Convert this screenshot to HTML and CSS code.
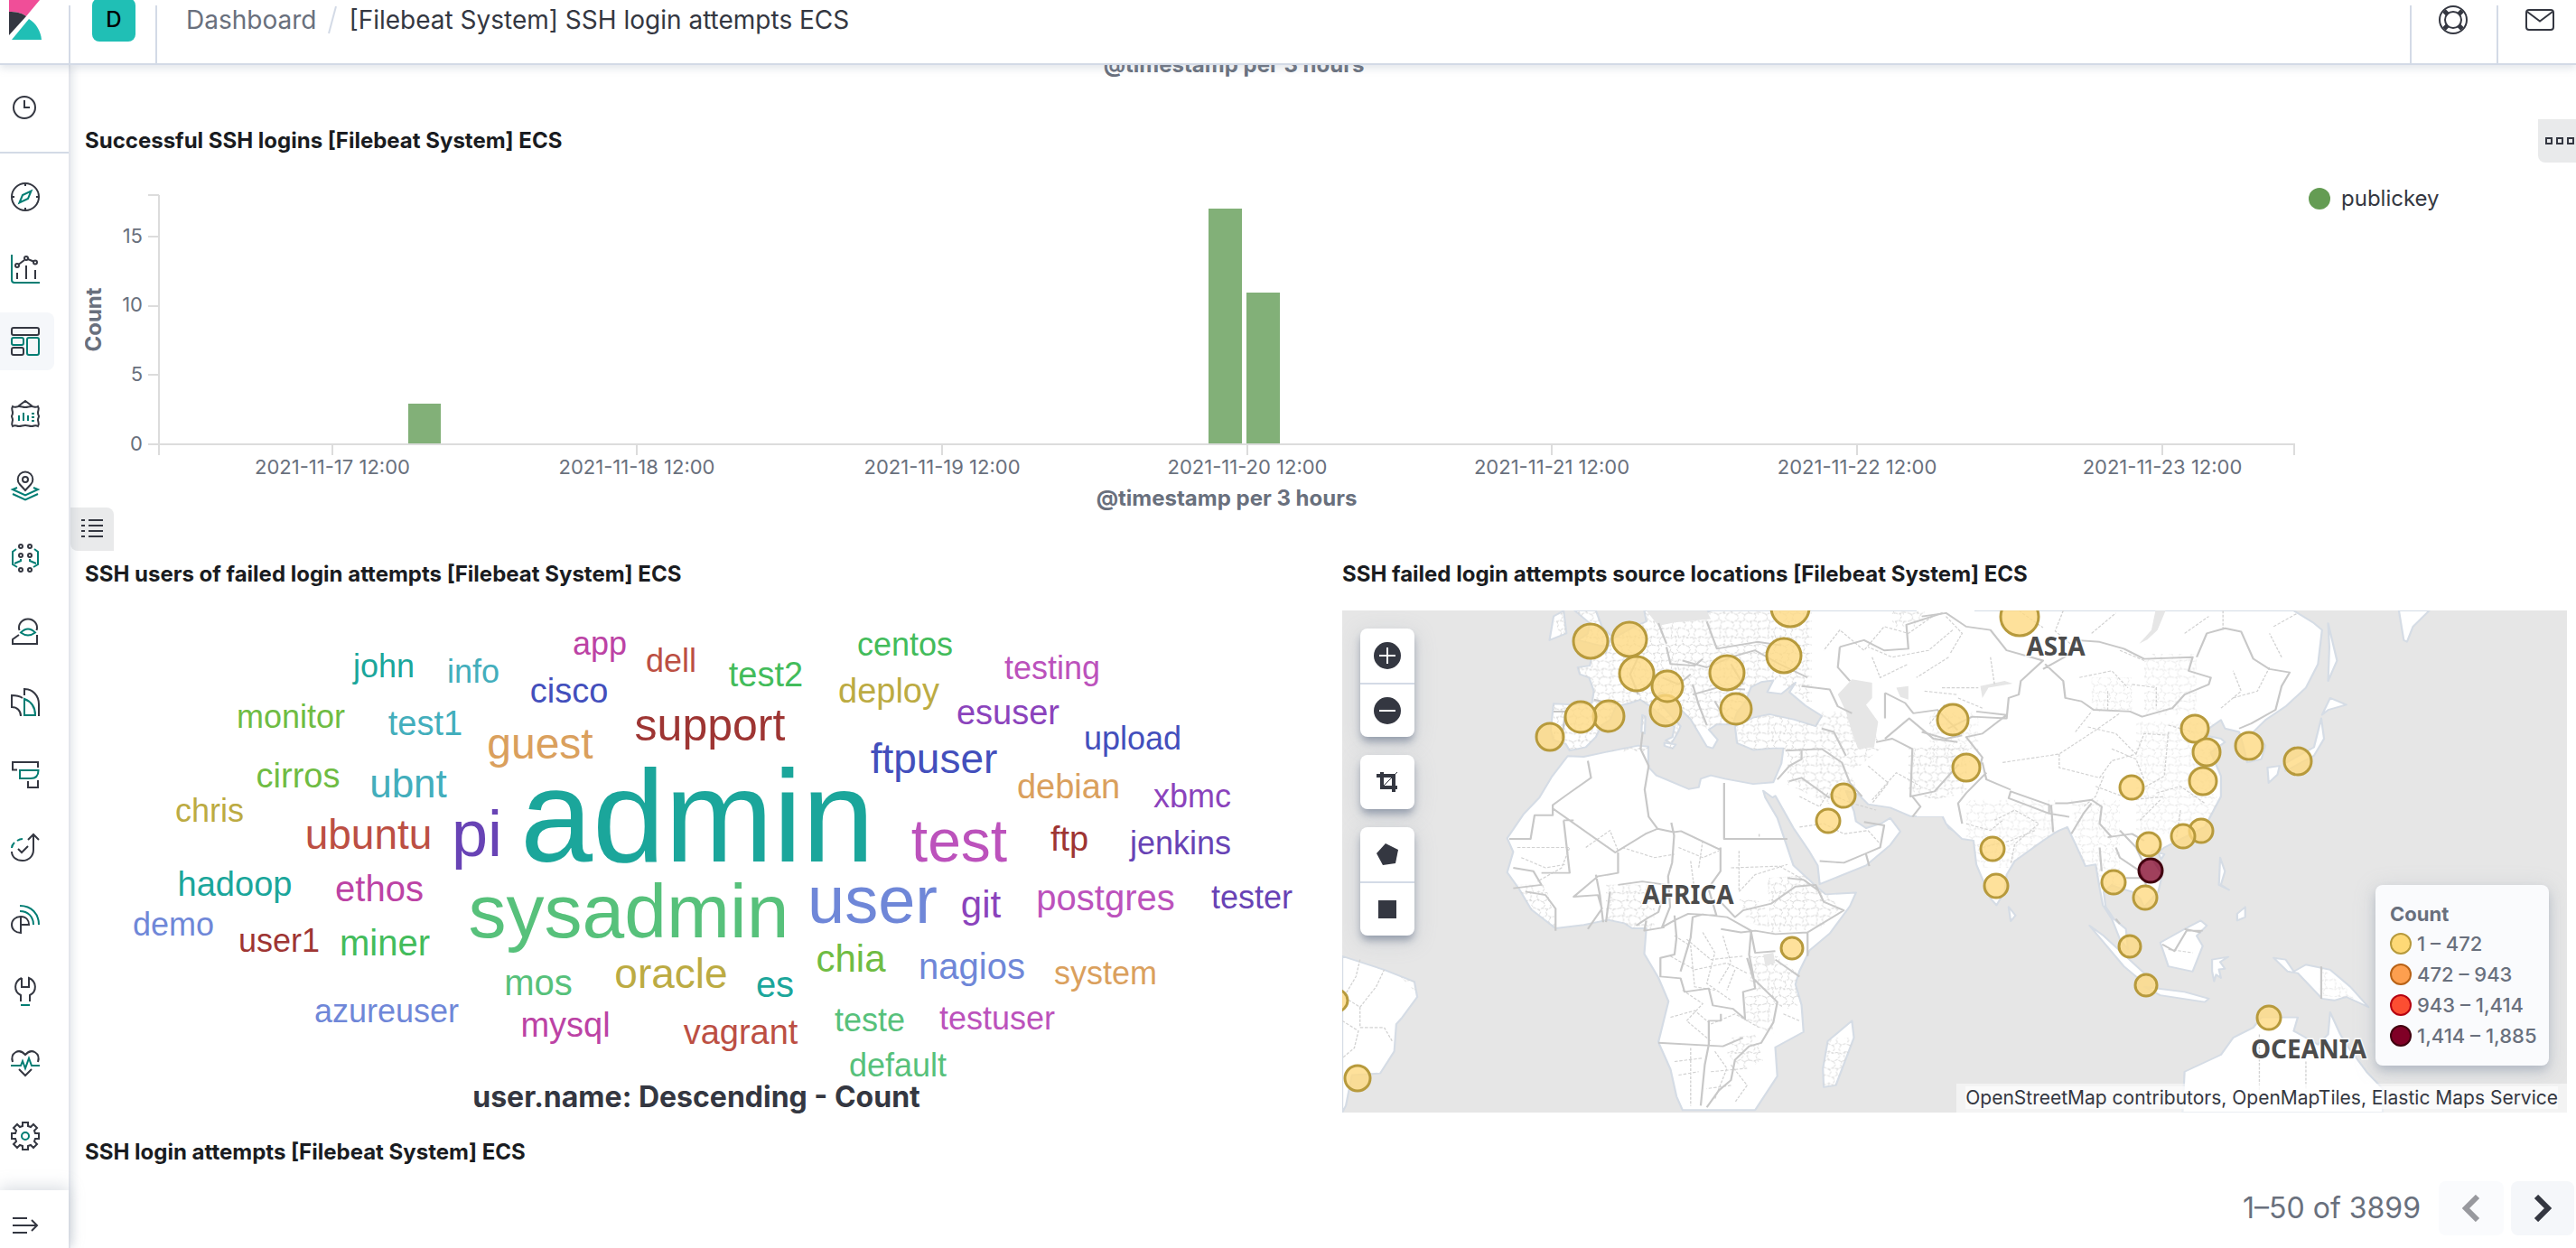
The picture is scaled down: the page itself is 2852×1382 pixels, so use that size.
FILE: index.html
```html
<!DOCTYPE html>
<html lang="en">
<head>
<meta charset="utf-8">
<title>[Filebeat System] SSH login attempts ECS</title>
<link rel="stylesheet" href="styles.css">
</head>
<body>
<header class="header">
  <a class="logo" href="#" aria-label="Home">
    <svg width="36" height="44" viewBox="0 0 36 44"><path fill="#f04e98" d="M0 0h34L19 18C14 14 7 13 0 13z"/><path fill="#343741" d="M0 13c7 0 14 1 19 5L0 39z"/><path fill="#20bfb5" d="M22 21c8 5 13 13 14 23H3z"/></svg>
  </a>
  <div class="cell space"><button class="avatar" type="button">D</button></div>
  <nav class="cell crumbs">
    <a href="#">Dashboard</a>
    <svg width="12" height="32" viewBox="0 0 12 32" aria-hidden="true"><path d="M10 1L2 31" stroke="#d3dae6" stroke-width="2"/></svg>
    <span class="current">[Filebeat System] SSH login attempts ECS</span>
  </nav>
  <div class="cell action"><button type="button" aria-label="Help">
    <svg width="32" height="32" viewBox="0 0 32 32" fill="none" stroke="#343741" stroke-width="2"><circle cx="16" cy="16" r="15"/><circle cx="16" cy="16" r="9"/><path stroke-width="5" d="M6 6l4 4M26 6l-4 4M6 26l4-4M26 26l-4-4"/></svg>
  </button></div>
  <div class="cell action news"><button type="button" aria-label="News">
    <svg width="32" height="24" viewBox="0 0 32 24" fill="none" stroke="#343741" stroke-width="2"><rect x="1" y="1" width="30" height="22" rx="3"/><path d="M2 3l14 10.500L30 3"/></svg>
  </button></div>
</header>

<nav class="side">
  <div class="recent"><a href="#" aria-label="Recently viewed"><svg width="32" height="32" viewBox="0 0 32 32"><circle cx="15" cy="16" r="12"/><path d="M15 8v8h6"/></svg></a></div>
  <ul class="apps">
    <li><a href="#" aria-label="Discover"><svg viewBox="0 0 32 32"><circle cx="16" cy="16" r="15"/><path d="M16 1v3M16 28v3M1 16h3M28 16h3"/><path class="g" d="M9.500 22.500l3.500-8.500 9.500-4.500-3.500 8.500z"/></svg></a></li>
    <li><a href="#" aria-label="Visualize"><svg viewBox="0 0 32 32"><path class="g" d="M1 0v28a3 3 0 0 0 3 3h28"/><path d="M7 20v7M17 12v15M27 17v10M9 10.500l6-4.500M19 5l6 2.500"/><circle cx="7" cy="12" r="2"/><circle cx="17" cy="4" r="2"/><circle cx="27" cy="8.500" r="2"/></svg></a></li>
    <li><a class="on" href="#" aria-label="Dashboard"><svg viewBox="0 0 32 32"><rect x="1" y="1" width="30" height="8" rx="2"/><rect class="g" x="1" y="12" width="13" height="8" rx="2"/><rect x="1" y="23" width="13" height="8" rx="2"/><rect class="g" x="18" y="12" width="13" height="19" rx="2"/></svg></a></li>
    <li><a href="#" aria-label="Canvas"><svg viewBox="0 0 32 32"><path d="M8 8l8-6 8 6M2 8c3 2 4 0 7 0s4 1 7 1 4-1 7-1 4 2 7 0c2 3 0 4 0 7s1 3 1 4-1 2-1 4 2 4 0 7c-3-2-4 0-7 0s-4-1-7-1-4 1-7 1-4-2-7 0c-2-3 0-5 0-7s-1-3-1-4 1-1 1-4-2-4 0-7z"/><path class="g" d="M9 18v6M14 15v9M19 18v6M23 16h3M23 20h3M23 24h3"/></svg></a></li>
    <li><a href="#" aria-label="Maps"><svg viewBox="0 0 32 32"><path d="M16 21l-6-6.500a8.300 8.300 0 1 1 12 0z"/><circle cx="16" cy="9" r="3"/><path class="g" d="M7 18l-5 2 14 6.500L30 20l-5-2M2 25l14 6.500L30 25"/></svg></a></li>
    <li><a href="#" aria-label="Machine Learning"><svg viewBox="0 0 32 32"><circle cx="11" cy="3" r="2"/><circle cx="21" cy="3" r="2"/><circle cx="11" cy="13" r="2"/><circle cx="21" cy="13" r="2"/><circle cx="11" cy="29" r="2"/><circle cx="21" cy="29" r="2"/><path class="g" d="M6 6L2 9v14l5 3M4 22l7-3v-2M26 6l4 3v14l-5 3M28 22l-7-3v-2"/></svg></a></li>
    <li><a href="#" aria-label="Metrics"><svg viewBox="0 0 32 32"><path d="M9.500 16a10 9.500 0 1 1 19 0M9 21l-7 5v5h27V21"/><path class="g" d="M11 18.500q8-8 16 0-8 6-16 0z"/></svg></a></li>
    <li><a href="#" aria-label="Logs"><svg viewBox="0 0 32 32"><path d="M15 8V1c9 0 16 7 16 17v13M13 11C10 9 6 8 1 8v13c6 0 10 4 10 10"/><path class="g" d="M15 12v18h12c0-8-4-15-12-18z"/></svg></a></li>
    <li><a href="#" aria-label="APM"><svg viewBox="0 0 32 32"><path d="M7 10.500H2V2h28v6M19 23v7h11v-8"/><path class="g" d="M10 11h20.500c0 6-3 9-8.500 9H10z"/></svg></a></li>
    <li><a href="#" aria-label="Uptime"><svg viewBox="0 0 32 32"><path d="M25 2v17c0 7-5 12-12 12S1 27 1 21M19 8l6-6 6 6M8 18l4 4 7-7"/><path class="g" d="M1 17c0-2 1-4 3-6M7 9q3-2 6-2"/></svg></a></li>
    <li><a href="#" aria-label="SIEM"><svg viewBox="0 0 32 32"><path d="M11 13v18C5 31 1 27 1 22s4-9 10-9 9 4 9 9h-9"/><path class="g" d="M10 7c9 0 15 6 15 15M10 1c13 0 21 9 21 21"/></svg></a></li>
    <li><a href="#" aria-label="Dev Tools"><svg viewBox="0 0 32 32"><path d="M12 1v10h8V1c9 4 9 15 1 19v7M12 1c-9 4-9 15-1 19v7"/><path class="g" d="M11 31h10"/></svg></a></li>
    <li><a href="#" aria-label="Stack Monitoring"><svg viewBox="0 0 32 32"><path d="M2 14C-1 4 9-2 16 6c7-8 17-2 14 8M9 22l7 7 7-7"/><path class="g" d="M0 18h11l2-5 3 8 4-11 3 8h9"/></svg></a></li>
    <li><a href="#" aria-label="Management"><svg viewBox="0 0 32 32"><path d="M13 1h6v4l3 1 3-3 4 4-3 3 1 3h4v6h-4l-1 3 3 3-4 4-3-3-3 1v4h-6v-4l-3-1-3 3-4-4 3-3-1-3H1v-6h4l1-3-3-3 4-4 3 3 3-1z"/><circle class="g" cx="16" cy="16" r="4"/></svg></a></li>
  </ul>
  <button class="collapse" type="button" aria-label="Expand menu"><svg width="32" height="32" viewBox="0 0 32 32"><path d="M2 8h16M2 16h27M2 24h16M23 10l6 6-6 6"/></svg></button>
</nav>

<main class="main">
  <p class="axis-note">@timestamp per 3 hours</p>

  <section class="panel">
    <div class="panel-head"><h2>Successful SSH logins [Filebeat System] ECS</h2>
      <button class="options" type="button" aria-label="Panel options"><svg width="34" height="8" viewBox="0 0 34 8" fill="none" stroke="#343741" stroke-width="2"><path d="M1 1h6v6H1zM13 1h6v6h-6zM25 1h6v6h-6z"/></svg></button></div>
    <div class="chart-row">
      <svg class="chart" viewBox="0 0 2448 400" role="img" aria-label="Successful logins over time">
        <g fill="#82b078"><rect x="358" y="267" width="36" height="45"/><rect x="1244" y="51" width="37" height="261"/><rect x="1286" y="144" width="37" height="168"/></g>
        <path fill="none" stroke="#dcdcdc" stroke-width="2" d="M82 36v288M70 36h12M70 82h12M70 159h12M70 235h12M70 312h2376v12M274 312v12M611 312v12M949 312v12M1287 312v12M1624 312v12M1962 312v12M2300 312v12"/>
        <g class="ticks" text-anchor="end"><text x="64" y="89">15</text><text x="64" y="165">10</text><text x="64" y="242">5</text><text x="64" y="319">0</text></g>
        <g class="ticks" text-anchor="middle"><text x="274" y="345">2021-11-17 12:00</text><text x="611" y="345">2021-11-18 12:00</text><text x="949" y="345">2021-11-19 12:00</text><text x="1287" y="345">2021-11-20 12:00</text><text x="1624" y="345">2021-11-21 12:00</text><text x="1962" y="345">2021-11-22 12:00</text><text x="2300" y="345">2021-11-23 12:00</text></g>
        <text class="axis" text-anchor="middle" x="1264" y="380">@timestamp per 3 hours</text>
        <text class="axis" text-anchor="middle" transform="translate(18 174) rotate(-90)">Count</text>
      </svg>
      <div class="legend"><span class="dot"></span>publickey</div>
      <button class="list-toggle" type="button" aria-label="Toggle legend"><svg width="24" height="22" viewBox="0 0 24 22" stroke="#343741" stroke-width="2"><path d="M0 1h4M8 1h16M0 7h4M8 7h16M0 13h4M8 13h16M0 19h4M8 19h16"/></svg></button>
    </div>
  </section>

  <div class="two">
  <section class="panel">
    <div class="panel-head"><h2>SSH users of failed login attempts [Filebeat System] ECS</h2></div>
    <svg class="cloud" viewBox="94 676 1354 556" text-anchor="middle" role="img" aria-label="Tag cloud of user names">
      <g font-size="36">
        <text x="664" y="725" fill="#bc43a5">app</text><text x="743" y="744" fill="#bc4f43">dell</text><text x="1002" y="726" fill="#43bc5b">centos</text><text x="1165" y="752" fill="#bc52bc">testing</text>
        <text x="425" y="750" fill="#1ba69b">john</text><text x="524" y="756" fill="#43aebc">info</text><text x="322" y="806" fill="#6fbc43">monitor</text><text x="1254" y="830" fill="#434fbc">upload</text>
        <text x="232" y="910" fill="#bcab43">chris</text><text x="1320" y="894" fill="#8b43bc">xbmc</text><text x="1307" y="946" fill="#6843b5">jenkins</text><text x="192" y="1036" fill="#6f87d8">demo</text>
        <text x="309" y="1054" fill="#9e3533">user1</text><text x="1386" y="1006" fill="#6843b5">tester</text><text x="1224" y="1090" fill="#daa05d">system</text><text x="428" y="1132" fill="#6f87d8">azureuser</text>
        <text x="963" y="1142" fill="#57c17b">teste</text><text x="1104" y="1140" fill="#bc52bc">testuser</text><text x="994" y="1192" fill="#57c17b">default</text>
      </g>
      <g font-size="38">
        <text x="630" y="778" fill="#434fbc">cisco</text><text x="848" y="760" fill="#43bc5b">test2</text><text x="984" y="778" fill="#bcab43">deploy</text><text x="1116" y="802" fill="#8b43bc">esuser</text>
        <text x="471" y="814" fill="#43aebc">test1</text><text x="330" y="872" fill="#6fbc43">cirros</text><text x="1183" y="884" fill="#daa05d">debian</text><text x="1184" y="942" fill="#9e3533">ftp</text>
        <text x="260" y="992" fill="#1ba69b">hadoop</text><text x="626" y="1148" fill="#bc43a5">mysql</text><text x="820" y="1156" fill="#bc4f43">vagrant</text>
      </g>
      <g font-size="40">
        <text x="420" y="998" fill="#bc43a5">ethos</text><text x="426" y="1058" fill="#43bc5b">miner</text><text x="596" y="1102" fill="#57c17b">mos</text><text x="858" y="1104" fill="#1ba69b">es</text><text x="1076" y="1084" fill="#6f87d8">nagios</text><text x="1224" y="1008" fill="#bc52bc">postgres</text>
      </g>
      <g font-size="42"><text x="942" y="1076" fill="#6fbc43">chia</text><text x="1086" y="1016" fill="#8b43bc">git</text></g>
      <text font-size="44" x="452" y="883" fill="#43aebc">ubnt</text>
      <g font-size="46"><text x="1034" y="856" fill="#434fbc">ftpuser</text><text x="408" y="940" fill="#bc4f43">ubuntu</text><text x="743" y="1094" fill="#bcab43">oracle</text></g>
      <text font-size="48" x="598" y="840" fill="#daa05d">guest</text>
      <text font-size="50" x="786" y="820" fill="#9e3533">support</text>
      <text font-size="66" x="1062" y="954" fill="#bc52bc">test</text>
      <text font-size="72" x="528" y="948" fill="#6843b5">pi</text>
      <text font-size="74" x="966" y="1022" fill="#6f87d8">user</text>
      <text font-size="84" x="696" y="1038" fill="#57c17b">sysadmin</text>
      <text font-size="144" x="772" y="954" fill="#1ba69b">admin</text>
      <text class="cloud-label" x="771" y="1226">user.name: Descending - Count</text>
    </svg>
  </section>

  <section class="panel">
    <div class="panel-head"><h2>SSH failed login attempts source locations [Filebeat System] ECS</h2></div>
    <div class="map">
      <svg class="world" viewBox="0 0 1356 556" preserveAspectRatio="xMidYMid slice" role="img" aria-label="Map of login sources">
        <defs>
          <pattern id="mesh" width="120" height="94" patternUnits="userSpaceOnUse">
            <path d="M0 3l10-5 12 7 9-6 11 3 10 5 12-8 9 6 11-3 12 5 10-6 14 2M0 97l10-5 12 7 9-6 11 3 10 5 12-8 9 6 11-3 12 5 10-6 14 2M0 27l12 4 9-7 11 5 12-6 8 7 13-3 10 5 9-8 12 6 11-3h13M10-2l4 14-3 19M31-1l-5 12 5 18M53 6l4 10-6 15M73 5l-5 12 3 10M94 5l6 8-4 12M110 0l-4 12 6 14M21 24l4 12-3 18M44 24l-5 14 4 14M65 28l5 10-6 10M84 24l-4 14 6 14M107 28l-5 10 6 16"/>
            <path d="M0 50l8 4 12-6 11 5 10-7 11 8 12-6 9 6 12-5 11 4 12-6 12 3M0 74l12-4 9 6 11-5 12 7 8-6 13 4 10-6 9 7 12-5 11 4 13-2M6 52l5 10-4 12M32 52l-6 12 5 8M54 53l5 10-6 12M76 52l-4 12 4 8M98 50l5 10-6 14M18 74l-4 12 4 12M42 74l6 10-5 12M66 74l-5 10 4 10M88 74l4 12-5 10M110 74l-5 10 5 8"/>
          </pattern>
          <path id="west-land" d="M785 43l5 32-30 15-60 40-10 35-35 10-5 30-30 5 5 20 23 10 12 40-5 35-45 5-50-3-7 78 7 30 30 10 10 20 40-10 25-30 15-35 20-15 15-40 35-10 25-10 25 20 30 30 30 30-5 30-17 10 14 10 18-37 5-15-30-40-30-40 10-20 20 10 30 40 25 30 15 30 25 50 15 5 12-25-22-30 20-15h40l10-35 20-30 15-45 25-15 30-5-15 35 35 5 35-33-15 28 40 40 40 30-15 30-55-20-60-15-40 10-45 25 5 50 40 20 50-5h25l-5 45-20 55-50 5-70-15-35-10-25 10-5 25-25 5-40-20-40-20-20-25v-60l-25-3-75 18-60 15-40-2-40 62-30 60-40 50-40 70 15 40-15 60 30 50 30 60 60 55 70-10 60-15 40 10 20 15h35l-5 75 35 70 25 70-25 120 30 80 15 80 15 40h180l55-100-5-85 70-45-5-80-15-60 10-40 25-60 50-50 50-80 15-40-75 5-25-25-55-60-40-140-30-60-5-20 23 20 7-5 45 95 40 70 20 40 5 55 115-55 60-60 25-40-25-40-20 15-40 15-25-20-5-30-20-60 30 10 25 30 55 10 50 25h80l15 35 45 30V43zM612 43l38 37-5 30-25 20 70 20 15-30-25-30-15-47zM560 60l25-17 7 67-42 20zM1300 1250l5 50-45 140-30 5-2-55 12-80zM36 1060l104 40 75 35 7 45-37 60-15 20-5 80-35 65-70 5-15 90-9 20zM835 432l28 5-8 12-20-8zM780 350l8 5-2 50-8-5zM950 43l-40 20-70-10-10-10z"/>
          <path id="east-land" d="M-50 43h920l50 37 20 20-10 100-30 70-50 55-50 40-30 35 30 40-10 40-35 10-10-50-10-40-35-10-10-25-30 25-10 20 40 10 10 10-35 30 25 70v60l-40 90-50 30-50 30-10 10h-20l-5 15 30 55-10 50-35 45-10-25-20-20-30-10-20-10-20 20 5 45 20 35 30 30 5 60-20-30-20-60-22-40-8-50-10-70-25 5-25-65-20-50-20 10-15 10-25 20-70 60-20 40-5 50-20 40-15-20-35-100-7-70-28-5-40-45-10-25h-50zM365 970l35 30 100 110-10 20-40-40zM500 1150l100 15 60 20-10 10-110-20zM540 1020l60-40 40-25 15 15-25 30 15 30-25 75-60-15zM668 1070l40-8-20 15 12 20-15 2 5 25-12-10-5 20-5-30zM820 1065l30 5 20 35 30-20 60 15 50 50 45 60-55-30-30 10-30-5-60-75-25-5zM600 1400l90-50 30-50 50-30 20-30h90l-10 40 60 40 25-30 5-65 25 65 15 30 50 80 40 50v70H595zM960 300l40 20-45 15-15 15zM938 360l7 60-25 50-70 45-5-20 75-50zM805 505l30-5-5 25-22 25zM1130 43h75l-40 47-15 45-8-5zM955 80l22 110-22 60 3-100zM165 915l17 25-12 17zM688 770l12 40-10 40 20 15-25-15zM730 935l20-20v30l-20 10zM535 755l15 5-8 15z"/>
          <clipPath id="west-clip"><use href="#west-land"/></clipPath>
          <clipPath id="east-clip"><use href="#east-land"/></clipPath>
        </defs>
        <rect width="1356" height="556" fill="#e6e6e6"/>
        <g transform="matrix(.446429 0 0 .376279 -16 -16)"><use class="land" href="#west-land"/></g>
        <g transform="matrix(.447708 0 0 .376279 664 -16)"><use class="land" href="#east-land"/></g>
        <path fill="#fff" d="M636 0h64v228h-64z"/>
        <g class="tile" transform="matrix(.446429 0 0 .376279 -16 -16)">
          <g class="mesh" clip-path="url(#west-clip)"><path d="M550 40h650v280L1100 240 1010 390H900V460H560V320h90zM1015 340h280v120h-280zM470 850h70l30 130-90-80zM690 850h120v130H690zM1090 830l120-10 60 100-50 60-120 10zM1045 1060h70l60 60-10 100-80-20-40-70zM1230 390l120-20 20 80-60 60-80-40zM1140 455l120 0 50 100-60 60-110-60zM1440 450l150-20v150l-90 20-60-30zM1035 1180l60-10 10 120-70-40zM1000 1300l60-10 20 80-50 20-40-40zM1230 1300h70v140h-70zM180 1120h50v60zM1020 890l60 10 20 80-60-20zM560 50h50v80zM1400 40h80v50h-80z"/></g>
          <path class="water" d="M1300 245l50 10v45l-15 20 30 50-10 75-40 5-15-50-15-60-20-50zM790 43h150l10 25-90 10-40 10zM1080 1055l25-5 5 30-25 8zM1410 270l30-5v40l-20-8z"/>
          <path class="admin" d="M80 1070l-10 50-30 60 40 30 40-60 20-50M80 1210v60h60l20 40M36 1250l40 30-10 50-30 30M470 740h130l-20 60-60 40M640 740l60-50 20 60M730 740l80 30 50-10M870 740l60 30 40-20M1020 750v120l40-50 80-30M1070 700v10M1000 800l120-5 60 40M480 770l60 30 50-10M850 1060l60 40 80-20 50 30M890 1010l60 60 80-10M930 990l30 60-20 90 60 50M880 1160l50 40-40 50 60 60M850 1240l60-20 40 40 60-30 60 40M860 1370l70-10M900 1330v170M950 1400l90-10M960 1340l30 50-30 90M1170 590l50 30 20-40 60 30 60 20M1170 680l60-10 50 30 60-10 30 40M1350 600l60-80 60 40M1340 500l50 50-40 60M1500 60l-60 50-60-20-50 70-60-60-40 60M1550 100l-60 60-90 20-60-30M1540 180l-80 60M1480 280l80 10M1530 320l-40 60M1350 180l20 60 70-40M900 780l10 90M930 720l-10 80M860 1000l40 30 10 120 50 10M980 1000l20 80-30 60M1010 1100l-20 60M1130 1230l40 20M870 1410l50-10M1000 1380l40 60-30 50M1000 1440l-60 10"/>
          <path class="border" d="M645 485l8 50-60 50-35 30v30h-45l-10 70h-53M558 625l155 130 75-55 30-15-22-35-10-80 10-70-20-50 5-50M818 685l40 10 18-3 98 55V740M983 550v165h157M974 740v70l-30 50 20 80-70-5-35 20-30 20 20-60-5-90 10-40 5-80-7-38M585 660l15 155h-70M585 660h25M720 755v60l-50 10-60 60 60-5 10 40-35 60M665 820l10 60 8 80M700 870l-10 90M720 850l60-10 60 10M835 870l-15 60-30 20-25 20M790 955l-5 30 50-10M860 940l5 65-5 50-35 10v55l50 5 10 40 60-10 10 50 50 10 30 30-5-80 30-10-5-40-10-60 5-70-60-40-60-8-25 8-5 60-15 60-10 40M1040 1065l15 60 60 70-10 60-30 60-30 10-35 40-10 60-30 30-30 50M820 1315l160 10 50-25M945 1320l-10 60-10 120M945 1325v-75h30v-20M975 980l50 10 35-5 50 10 80-5 90-65-50-25-20-50-50 5-60 50-70 20-20 20-40-50M1050 990l10 60 50-5M1190 990v70M1110 1070l60 50M460 800l50 10 20 40-70 10M490 870l50 10 25 40v65M1140 830l40 5 35 30M1220 780l60 5 50-25 40-20 10-65-50-10M1335 760l8 35M1135 455l90-5 50 40 20 60 30 40M1145 545l30-10 70 60M1115 540l30-40 30-20V455M1225 390l30 10 30 70M1175 265l70 10 20 50 35 20M1270 150l60-20 50 30 60-5-5-70 90-35M1270 150l-5 60 30 40M1382 285v75M1382 285l50 30 20 30 60-10 50 60M1360 430l40-10 50 30-5 140 60-15 60-80M1382 420l60-60 60 60 60 10M1450 590l20 30-20 30M840 150l10 50 60 5 20-20M820 80l20 60M830 240l40 20 30-30M880 190l60 20 60-30 60-20 60 40 70 40M940 75l25 80 100-20 60 10M905 260l15 60 20 60M770 180l-20 50 20 60M660 305l55 15M560 340h30l-10 80M905 290l60-20 70 5M960 310l30 60M1000 200l30 60"/>
        </g>
        <g class="tile" transform="matrix(.447708 0 0 .376279 664 -16)">
          <g class="mesh faint" clip-path="url(#east-clip)"><path d="M500 170h130v180H500zM370 240h100v100H370zM480 370h200v330H480zM-30 340h120v150H-30zM320 600h120v250H340zM60 600h220v200H60zM940 1095l60 60 20 30-90-10z"/></g>
          <path class="water" d="M553 43l-20 57-25 28-20 12 30-40 10-57zM95 265l60-15 20 8-60 12-15 30z"/>
          <path class="admin" d="M150 490l140-25 90-70 60-50M290 465v40l100 30 30-50 60-20-50-60-70-20M400 530l-20 60-30 30M480 465l20-60 60 5M560 400l-10 130-60 40M330 400l40-60M120 180l10 80M0 270h90M190 43l60 50M300 43l-20 60 60 60M370 110l60-60M440 160l60 30M695 43v60M820 90l60-40M840 180l-30-70M560 380l60 20M410 280v60M470 260l60 10v60M340 240l80-20 40 50M130 660l50-30 60 40-60 60-10 60M60 670l60 20 30-30M100 740l70-20 60-30M785 1290v210M900 1370v130M530 580l60-20 60 50M540 600l-50 60M590 630l-10 80M40 300l60 30M420 450l60 30 20 60M380 560l90 40 80-10M10 60l40 50-30 60M600 110l60-50M720 300l60-20 30-70M690 330l50-50-20-60M560 1040l60 10"/>
          <path class="border" d="M-50 60l60-10 50 40 60 10 40 60 90 30-55 60-5 40-25 10-5 60-85-5-60 35M255 200l45 50 5 50 40 10 30 25 90 5 30 15 75-25 30-40 60-30 5-20-55-20 10-40-120 5-50-30-60-20-60-5-20 45-60 40M630 180l25-70 45-15 40 10 30 80 40 30 50 10-20 40-15 70-60 40-30 15M85 340l75 10-60 55-40 10 40 60-10 40M-50 400l60 20 40-10M100 490l10 50 60 30M170 575l-5 20 100 45v-25zM110 520l-50 60-20 30 10 60M270 615l5 80M265 640l50 10M280 610h30l60-10 25 20-5 50 30 40M320 700l30-60 20-30M390 740l5 70M430 740l10 30 50 40 15 40M455 830h35M410 710l60-10 30 20M440 690l40 50 20 50M545 1025l30 20 30-60h40M600 980l40 10M938 1090v95M430 950l10 15"/>
        </g>
        <g class="marks">
          <circle cx="-6" cy="432" r="12"/><circle cx="17" cy="518" r="14"/><circle cx="275" cy="34" r="19"/><circle cx="318" cy="32" r="19"/><circle cx="326" cy="70" r="19"/><circle cx="358" cy="111" r="17"/><circle cx="360" cy="84" r="17"/><circle cx="426" cy="69" r="19"/><circle cx="436" cy="109" r="17"/><circle cx="489" cy="50" r="19"/><circle cx="496" cy="-3" r="21"/><circle cx="295" cy="117" r="17"/><circle cx="264" cy="118" r="17"/><circle cx="230" cy="140" r="15"/><circle cx="555" cy="205" r="13"/><circle cx="538" cy="233" r="13"/><circle cx="498" cy="374" r="12"/>
          <circle cx="750" cy="7" r="21"/><circle cx="676" cy="121" r="17"/><circle cx="691" cy="174" r="15"/><circle cx="720" cy="264" r="13"/><circle cx="724" cy="305" r="13"/><circle cx="874" cy="196" r="13"/><circle cx="944" cy="131" r="15"/><circle cx="957" cy="157" r="15"/><circle cx="1004" cy="150" r="15"/><circle cx="1058" cy="167" r="15"/><circle cx="953" cy="189" r="15"/><circle cx="951" cy="244" r="13"/><circle cx="931" cy="250" r="13"/><circle class="dark" cx="895" cy="288" r="13"/><circle cx="893" cy="259" r="13"/><circle cx="854" cy="301" r="13"/><circle cx="889" cy="318" r="13"/><circle cx="872" cy="372" r="12"/><circle cx="890" cy="415" r="12"/><circle cx="1026" cy="451" r="13"/>
        </g>
        <g class="continents" text-anchor="middle"><text x="383" y="325">AFRICA</text><text x="790" y="50">ASIA</text><text x="1070" y="496">OCEANIA</text></g>
      </svg>
      <div class="tools">
        <div class="tool-group">
          <button type="button" aria-label="Zoom in"><svg width="30" height="30" viewBox="0 0 30 30"><circle cx="15" cy="15" r="15" fill="#343741"/><path d="M6 15h18M15 6v18" stroke="#fff" stroke-width="2"/></svg></button>
          <button type="button" aria-label="Zoom out"><svg width="30" height="30" viewBox="0 0 30 30"><circle cx="15" cy="15" r="15" fill="#343741"/><path d="M6 15h18" stroke="#fff" stroke-width="2"/></svg></button>
        </div>
        <div class="tool-group"><button type="button" aria-label="Fit to bounds"><svg width="24" height="24" viewBox="0 0 24 24" fill="none" stroke="#343741" stroke-width="4"><path d="M0 5h19v18M6 1v17h17"/><path stroke-width="1" d="M7 17L23 1"/></svg></button></div>
        <div class="tool-group">
          <button type="button" aria-label="Draw polygon"><svg width="24" height="24" viewBox="0 0 24 24"><path fill="#343741" d="M10 0l14 7-3 15-14 2L0 11z"/></svg></button>
          <button type="button" aria-label="Draw rectangle"><svg width="20" height="20" viewBox="0 0 20 20"><path fill="#343741" d="M0 0h20v20H0z"/></svg></button>
        </div>
      </div>
      <div class="map-legend">
        <h3>Count</h3>
        <ul><li class="c1">1 – 472</li><li class="c2">472 – 943</li><li class="c3">943 – 1,414</li><li class="c4">1,414 – 1,885</li></ul>
      </div>
      <div class="credit"><a href="#">OpenStreetMap contributors</a>, <a href="#">OpenMapTiles</a>, <a href="#">Elastic Maps Service</a></div>
    </div>
  </section>
  </div>

  <section class="panel last">
    <div class="panel-head"><h2>SSH login attempts [Filebeat System] ECS</h2></div>
    <div class="pager"><span>1–50 of 3899</span>
      <button type="button" disabled aria-label="Previous page"><svg width="20" height="30" viewBox="0 0 20 30" fill="none" stroke="#98999e" stroke-width="6"><path d="M17 2L4 15l13 13"/></svg></button>
      <button type="button" aria-label="Next page"><svg width="20" height="30" viewBox="0 0 20 30" fill="none" stroke="#343741" stroke-width="6"><path d="M3 2l13 13L3 28"/></svg></button>
    </div>
  </section>
</main>
</body>
</html>
```
FILE: styles.css
```css
* { box-sizing: border-box; }
html, body { height: 100%; }
body {
  margin: 0;
  display: grid;
  grid-template-columns: 78px minmax(0, 1fr);
  grid-template-rows: 72px minmax(0, 1fr);
  overflow: hidden;
  background: #fff;
  color: #343741;
  font: 24px/32px Inter, "Liberation Sans", sans-serif;
}
button { padding: 0; border: 0; background: none; font: inherit; color: inherit; display: flex; align-items: center; justify-content: center; }
a { color: inherit; text-decoration: none; }
ul { list-style: none; margin: 0; padding: 0; }
h2, h3, p { margin: 0; }
svg { display: block; }

/* Header */
.header {
  grid-column: 1 / -1;
  position: relative;
  z-index: 3;
  display: flex;
  align-items: flex-start;
  background: #fff;
  border-bottom: 2px solid #d3dae6;
  box-shadow: 0 4px 8px rgba(152, 162, 179, .25);
}
.logo { width: 76px; padding-left: 10px; }
.cell { display: flex; align-items: center; height: 64px; margin-top: 6px; padding-bottom: 32px; border-left: 2px solid #d3dae6; }
.space { width: 96px; padding-left: 24px; }
.avatar { width: 48px; height: 48px; border-radius: 8px; background: #20bfb5; color: #000; font-weight: 500; }
.crumbs { flex: 1; gap: 12px; padding-left: 32px; font-size: 28px; color: #69707d; }
.crumbs .current { color: #343741; }
.action { width: 96px; padding-left: 30px; }
.news { width: 88px; }

/* Side navigation */
.side { position: relative; z-index: 2; display: flex; flex-direction: column; border-right: 2px solid #e3e6ec; box-shadow: 3px 0 8px rgba(152, 162, 179, .25); background: #fff; }
.side svg { width: 32px; height: 32px; fill: none; stroke: #343741; stroke-width: 2; overflow: visible; }
.side .g { stroke: #017d73; }
.recent { height: 98px; padding: 31px 12px; border-bottom: 2px solid #d3dae6; }
.apps { flex: 1; padding-top: 16px; overflow: hidden; }
.apps a { display: flex; align-items: center; width: 60px; height: 64px; margin-bottom: 16px; padding-left: 12px; border-radius: 0 8px 8px 0; }
.apps .on { background: #f5f7fa; }
.collapse { height: 64px; padding: 14px 12px 0; justify-content: flex-start; box-shadow: 0 -4px 16px rgba(152, 162, 179, .35); }

/* Dashboard */
.main { padding: 0 10px 0 16px; overflow: hidden; }
.axis-note { margin: -12px 0 48px; height: 24px; padding-right: 204px; text-align: center; line-height: 24px; font-weight: 700; color: #69707d; }
.panel-head { display: flex; align-items: center; justify-content: space-between; height: 48px; }
.panel-head h2 { font-size: 24px; line-height: 32px; font-weight: 700; color: #1a1c21; }
.options { width: 42px; height: 48px; margin-right: -10px; padding-left: 8px; justify-content: flex-start; overflow: hidden; background: #e9eaeb; border-radius: 0 0 0 8px; }
.options svg { flex: none; }
.chart-row { position: relative; display: flex; margin-bottom: 32px; }
.chart { flex: 1; min-width: 0; }
.chart .ticks { font-size: 22px; fill: #69707d; }
.chart .axis { font-size: 24px; font-weight: 700; fill: #69707d; }
.legend { display: flex; align-items: center; gap: 12px; width: 300px; height: 32px; margin-top: 24px; padding-left: 14px; }
.dot { width: 24px; height: 24px; border-radius: 50%; background: #649c53; }
.list-toggle { position: absolute; left: -16px; bottom: -30px; width: 48px; height: 48px; background: #e9eaeb; border-radius: 0 8px 0 8px; }

.two { display: grid; grid-template-columns: 1354fr 1356fr; gap: 38px; }
.cloud, .map { width: 100%; margin-top: 16px; }
.cloud { font-family: "Liberation Sans", Arial, sans-serif; overflow: visible; }
.cloud-label { font: 700 32px Inter, sans-serif; fill: #343741; }

.map { position: relative; overflow: hidden; }
.world { width: 100%; }
.land { fill: #fff; stroke: #d5dce5; stroke-width: 5; stroke-linejoin: round; }
.water { fill: #e6e6e6; }
.mesh > path { fill: url(#mesh); }
#mesh path { fill: none; stroke: #cfcfcf; stroke-width: 2; stroke-dasharray: 8 3; }
.faint { opacity: .6; }
.border { fill: none; stroke: #c8c8c8; stroke-width: 5; stroke-linejoin: round; }
.admin { fill: none; stroke: #d2d2d2; stroke-width: 3; stroke-dasharray: 8 4; }
.marks circle { fill: rgba(254, 217, 130, .8); stroke: #b79a3c; stroke-width: 3; }
.marks .dark { fill: rgba(128, 0, 38, .75); stroke: #41000f; }
.continents { font: 700 28px "Noto Sans", sans-serif; fill: #4c4c4c; stroke: rgba(255, 255, 255, .8); stroke-width: 3; paint-order: stroke; }

.tools { position: absolute; left: 20px; top: 20px; display: flex; flex-direction: column; gap: 20px; }
.tool-group { width: 60px; border-radius: 8px; background: #fff; box-shadow: 0 6px 8px -1px rgba(105, 119, 140, .6), 0 6px 24px rgba(152, 162, 179, .3); }
.tool-group button { width: 60px; height: 60px; }
.tool-group button + button { border-top: 2px solid #d3dae6; }

.map-legend { position: absolute; right: 20px; bottom: 52px; width: 192px; height: 200px; padding: 16px; border-radius: 8px; background: #fafbfd; box-shadow: 0 6px 12px -1px rgba(152, 162, 179, .6), 0 4px 24px rgba(152, 162, 179, .25); color: #69707d; font-size: 22px; }
.map-legend h3 { font-size: 22px; line-height: 32px; }
.map-legend li { display: flex; align-items: center; gap: 6px; height: 34px; font-weight: 500; white-space: nowrap; }
.map-legend li::before { content: ""; flex: none; width: 20px; height: 20px; border-radius: 50%; border: 2px solid #b79a3c; background: #fed976; }
.map-legend .c2::before { background: #fd9f4f; border-color: #b86216; }
.map-legend .c3::before { background: #fc4e32; border-color: #b50010; }
.map-legend .c4::before { background: #800026; border-color: #41000f; }
.credit { position: absolute; right: 0; bottom: 0; height: 32px; padding: 0 10px; background: rgba(255, 255, 255, .5); font-size: 21px; line-height: 32px; white-space: nowrap; }
.credit a { background: rgba(255, 255, 255, .6); }

.last { margin-top: 20px; }
.pager { display: flex; align-items: center; justify-content: flex-end; gap: 8px; height: 60px; margin: 8px -8px 0 0; font-size: 32px; color: #69707d; }
.pager span { margin-right: 12px; }
.pager button { width: 70px; height: 60px; border-radius: 8px; background: #f5f7fa; }
.pager button:disabled { width: 72px; background: #fafbfd; }
```
